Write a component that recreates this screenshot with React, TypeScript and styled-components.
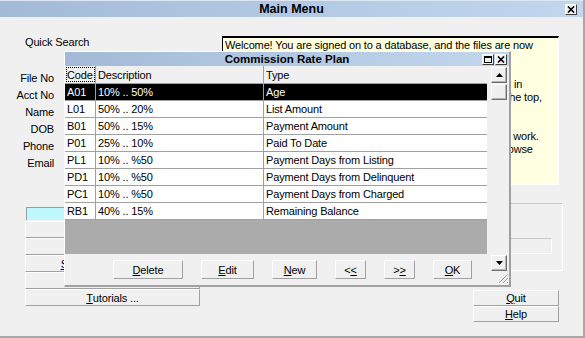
import React from "react";
import styled, { createGlobalStyle } from "styled-components";

const Global = createGlobalStyle`
  html, body { margin: 0; padding: 0; background: #f0f0f0; }
  body {
    font-family: "Liberation Sans", Arial, sans-serif;
    font-size: 11px;
    letter-spacing: -0.15px;
    color: #000;
  }
  #root { width: 585px; height: 338px; }
  u { text-decoration-thickness: 1px; text-underline-offset: 1px; }
`;

const Window = styled.div`
  position: relative;
  width: 585px;
  height: 338px;
  box-sizing: border-box;
  background: #f0f0f0;
  border-right: 2px solid #a9a9a9;
  border-bottom: 2px solid #a9a9a9;
  display: flex;
  flex-direction: column;
  overflow: hidden;
`;

const TitleBar = styled.div<{ $h: number; $size: number; $line?: boolean }>`
  flex: none;
  box-sizing: border-box;
  height: ${(p) => p.$h}px;
  display: grid;
  grid-template-columns: 1fr auto 1fr;
  align-items: center;
  background: linear-gradient(to right, #a3bad7, #c2d7ee);
  border-top: ${(p) => (p.$line ? "1px solid #dde7f3" : "none")};
  font-weight: bold;
  font-size: ${(p) => p.$size}px;
  letter-spacing: 0;
`;

const TitleText = styled.span`
  white-space: nowrap;
`;

const TitleButtons = styled.div<{ $mr: number }>`
  justify-self: end;
  display: flex;
  gap: 1px;
  margin-right: ${(p) => p.$mr}px;
`;

const CtlButton = styled.div`
  width: 12px;
  height: 11px;
  box-sizing: border-box;
  background: #f0f0f0;
  border: 1px solid;
  border-color: #ffffff #404040 #404040 #ffffff;
  display: grid;
  place-items: center;
`;

const Body = styled.div`
  flex: 1;
  display: flex;
  flex-direction: column;
  padding: 19px 22px 0 25px;
`;

const TopRow = styled.div`
  display: flex;
  align-items: flex-start;
`;

const LeftCol = styled.div`
  width: 197px;
  flex: none;
  display: flex;
  flex-direction: column;
`;

const QuickLabel = styled.div`
  line-height: 13px;
  white-space: nowrap;
`;

const FieldList = styled.div`
  margin: 20px 0 0 -15px;
  display: flex;
  flex-direction: column;
`;

const FieldRow = styled.div`
  height: 17px;
  display: grid;
  grid-template-columns: 44px 1fr;
  column-gap: 12px;
  align-items: center;
`;

const FieldLabel = styled.span`
  text-align: right;
  white-space: nowrap;
`;

const FieldInput = styled.div`
  height: 15px;
  box-sizing: border-box;
  background: #fff;
  border: 1px solid;
  border-color: #a0a0a0 #fff #fff #a0a0a0;
`;

const InfoPanel = styled.div`
  width: 337px;
  height: 149px;
  box-sizing: border-box;
  background: #ffffe1;
  border-top: 2px solid #000;
  border-left: 1px solid #000;
  border-right: 1px solid #fff;
  border-bottom: 1px solid #fff;
  padding: 1px 0 0 2px;
  overflow: hidden;
`;

const InfoLine = styled.div`
  line-height: 13px;
  white-space: nowrap;
`;

const LowerGrid = styled.div`
  display: grid;
  grid-template-columns: 175px 1fr;
  column-gap: 15px;
  align-items: start;
`;

const NavCol = styled.div`
  display: flex;
  flex-direction: column;
`;

const CyanField = styled.div`
  margin: 22px 0 0 1px;
  height: 13px;
  box-sizing: border-box;
  background: #bff9ff;
  border-top: 1px solid #9a9a9a;
  border-left: 1px solid #9a9a9a;
`;

const NavStack = styled.div`
  margin-top: 1px;
  display: flex;
  flex-direction: column;
`;

const FlatButton = styled.div`
  box-sizing: border-box;
  background: #f0f0f0;
  border: 1px solid;
  border-color: #ffffff #a0a0a0 #a0a0a0 #ffffff;
  display: flex;
  align-items: center;
  justify-content: center;
  white-space: nowrap;
`;

const NavButton = styled(FlatButton)<{ $w?: number }>`
  height: 17px;
  width: ${(p) => (p.$w ? `${p.$w}px` : "auto")};
`;

const GroupBox = styled.div`
  margin: 18px -2px 0 0;
  height: 68px;
  box-sizing: border-box;
  border-top: 1px solid #c8c8c8;
  border-right: 1px solid #fff;
  border-bottom: 1px solid #fff;
  display: flex;
  flex-direction: column;
  justify-content: flex-end;
  padding: 0 10px 16px 0;
`;

const GroupField = styled.div`
  height: 16px;
  box-sizing: border-box;
  border-top: 1px solid #c8c8c8;
  border-right: 1px solid #fff;
  border-bottom: 1px solid #fff;
`;

const BottomRow = styled.div`
  display: flex;
  justify-content: space-between;
  align-items: flex-start;
`;

const SideButtons = styled.div`
  margin: 1px 2px 0 0;
  width: 86px;
  display: flex;
  flex-direction: column;
`;

const SideButton = styled(FlatButton)`
  height: 16px;
`;

/* ---------- dialog ---------- */

const Dialog = styled.div`
  position: absolute;
  left: 64px;
  top: 51px;
  width: 447px;
  height: 236px;
  box-sizing: border-box;
  background: #f0f0f0;
  border-top: 1px solid #fff;
  border-left: 1px solid #fff;
  border-right: 2px solid #a0a0a0;
  border-bottom: 2px solid #a0a0a0;
  display: flex;
  flex-direction: column;
`;

const DialogBody = styled.div`
  flex: 1;
  display: flex;
`;

const LeftPane = styled.div`
  width: 422px;
  flex: none;
  display: flex;
  flex-direction: column;
`;

const GridBox = styled.div`
  height: 188px;
  background: #ababab;
  display: flex;
  flex-direction: column;
`;

const GridRow = styled.div<{ $head?: boolean; $sel?: boolean }>`
  display: grid;
  grid-template-columns: 31px 168px 1fr;
  height: ${(p) => (p.$head ? 18 : 17)}px;
  box-sizing: border-box;
  border-bottom: 1px solid #a0a0a0;
  background: ${(p) => (p.$head ? "#f0f0f0" : p.$sel ? "#000" : "#fff")};
  color: ${(p) => (p.$sel ? "#fff" : "#000")};
`;

const Cell = styled.div<{ $focus?: boolean }>`
  padding-left: 2px;
  display: flex;
  align-items: center;
  white-space: nowrap;
  overflow: hidden;
  border-right: 1px solid #a0a0a0;
  outline: ${(p) => (p.$focus ? "1px dotted #000" : "none")};
  outline-offset: -2px;
  &:last-child { border-right: none; }
`;

const ButtonRow = styled.div`
  display: flex;
  gap: 18px;
  padding: 6px 0 0 48px;
`;

const DlgButton = styled(FlatButton)<{ $w: number }>`
  width: ${(p) => p.$w}px;
  height: 19px;
`;

const RightPane = styled.div`
  margin: 1px 2px 0 3px;
  width: 17px;
  flex: none;
  display: flex;
  flex-direction: column;
`;

const ScrollBar = styled.div`
  height: 204px;
  display: flex;
  flex-direction: column;
  align-items: flex-end;
`;

const ScrollBtn = styled.div`
  width: 16px;
  height: 16px;
  box-sizing: border-box;
  background: #f0f0f0;
  border: 1px solid;
  border-color: #ffffff #6f6f6f #6f6f6f #ffffff;
  box-shadow: inset -1px -1px 0 #b4b4b4;
  display: grid;
  place-items: center;
`;

const Thumb = styled(ScrollBtn)`
  margin-top: 1px;
`;

const Track = styled.div`
  flex: 1;
`;

const Grip = styled.div`
  margin: 2px -2px 0 0;
  align-self: flex-end;
  width: 11px;
  height: 11px;
  display: flex;
`;

const CloseGlyph = () => (
  <svg width="8" height="7" viewBox="0 0 8 7">
    <path d="M1 0.5 L7 6.5 M7 0.5 L1 6.5" stroke="#000" strokeWidth="1.6" />
  </svg>
);

const MaxGlyph = () => (
  <svg width="8" height="7" viewBox="0 0 8 7">
    <rect x="0.5" y="0.5" width="7" height="6" fill="none" stroke="#000" strokeWidth="1" />
    <rect x="0" y="0" width="8" height="2" fill="#000" />
  </svg>
);

const Arrow = ({ down }: { down?: boolean }) => (
  <svg width="7" height="4" viewBox="0 0 7 4">
    <path d={down ? "M0 0 L7 0 L3.5 4 Z" : "M0 4 L7 4 L3.5 0 Z"} fill="#000" />
  </svg>
);

const GripGlyph = () => (
  <svg width="11" height="11" viewBox="0 0 11 11">
    <path d="M10 1 L1 10 M10 5 L5 10 M10 9 L9 10" stroke="#a0a0a0" strokeWidth="1" />
    <path d="M10 2 L2 10 M10 6 L6 10" stroke="#ffffff" strokeWidth="1" />
  </svg>
);

const labels = ["File No", "Acct No", "Name", "DOB", "Phone", "Email"];

const infoLines = [
  "Welcome! You are signed on to a database, and the files are now",
  "open and ready. To find an account, type a file number,",
  "account number, name, birth date, phone or email into",
  "the Quick Search boxes at the left. Matching cases are listed in",
  "the grid below these. Use the buttons on the left, and along the top,",
  "to open the other screens of the program.",
  "",
  "The Tutorials button shows you just how the various screens work.",
  "Click any of the buttons below to learn how to search and browse",
];

const rows: [string, string, string][] = [
  ["A01", "10% .. 50%", "Age"],
  ["L01", "50% .. 20%", "List Amount"],
  ["B01", "50% .. 15%", "Payment Amount"],
  ["P01", "25% .. 10%", "Paid To Date"],
  ["PL1", "10% .. %50", "Payment Days from Listing"],
  ["PD1", "10% .. %50", "Payment Days from Delinquent"],
  ["PC1", "10% .. %50", "Payment Days from Charged"],
  ["RB1", "40% .. 15%", "Remaining Balance"],
];

export default function App() {
  return (
    <>
      <Global />
      <Window>
        <TitleBar $h={17} $size={12.5} $line>
          <span />
          <TitleText>Main Menu</TitleText>
          <TitleButtons $mr={6}>
            <CtlButton>
              <CloseGlyph />
            </CtlButton>
          </TitleButtons>
        </TitleBar>
        <Body>
          <TopRow>
            <LeftCol>
              <QuickLabel>Quick Search</QuickLabel>
              <FieldList>
                {labels.map((l) => (
                  <FieldRow key={l}>
                    <FieldLabel>{l}</FieldLabel>
                    <FieldInput />
                  </FieldRow>
                ))}
              </FieldList>
            </LeftCol>
            <InfoPanel>
              {infoLines.map((l, i) => (
                <InfoLine key={i}>{l || "\u00a0"}</InfoLine>
              ))}
            </InfoPanel>
          </TopRow>
          <LowerGrid>
            <NavCol>
              <CyanField />
              <NavStack>
                <NavButton>
                  <u>D</u>ebtor Files
                </NavButton>
                <NavButton>
                  <u>C</u>lient Files
                </NavButton>
                <NavButton>
                  <u>S</u>tatistics and Reports
                </NavButton>
                <NavButton>
                  <u>U</u>tilities
                </NavButton>
              </NavStack>
            </NavCol>
            <GroupBox>
              <GroupField />
            </GroupBox>
          </LowerGrid>
          <BottomRow>
            <NavButton $w={175}>
              <u>T</u>utorials ...
            </NavButton>
            <SideButtons>
              <SideButton>
                <u>Q</u>uit
              </SideButton>
              <SideButton>
                <u>H</u>elp
              </SideButton>
            </SideButtons>
          </BottomRow>
        </Body>

        <Dialog>
          <TitleBar $h={14} $size={11.5}>
            <span />
            <TitleText>Commission Rate Plan</TitleText>
            <TitleButtons $mr={2}>
              <CtlButton>
                <MaxGlyph />
              </CtlButton>
              <CtlButton>
                <CloseGlyph />
              </CtlButton>
            </TitleButtons>
          </TitleBar>
          <DialogBody>
            <LeftPane>
              <GridBox>
                <GridRow $head>
                  <Cell $focus>Code</Cell>
                  <Cell>Description</Cell>
                  <Cell>Type</Cell>
                </GridRow>
                {rows.map((r, i) => (
                  <GridRow key={r[0]} $sel={i === 0}>
                    <Cell>{r[0]}</Cell>
                    <Cell>{r[1]}</Cell>
                    <Cell>{r[2]}</Cell>
                  </GridRow>
                ))}
              </GridBox>
              <ButtonRow>
                <DlgButton $w={70}>
                  <u>D</u>elete
                </DlgButton>
                <DlgButton $w={53}>
                  <u>E</u>dit
                </DlgButton>
                <DlgButton $w={45}>
                  <u>N</u>ew
                </DlgButton>
                <DlgButton $w={31}>
                  {"<"}
                  <u>{"<"}</u>
                </DlgButton>
                <DlgButton $w={31}>
                  {">"}
                  <u>{">"}</u>
                </DlgButton>
                <DlgButton $w={39}>
                  <u>O</u>K
                </DlgButton>
              </ButtonRow>
            </LeftPane>
            <RightPane>
              <ScrollBar>
                <ScrollBtn>
                  <Arrow />
                </ScrollBtn>
                <Thumb />
                <Track />
                <ScrollBtn>
                  <Arrow down />
                </ScrollBtn>
              </ScrollBar>
              <Grip>
                <GripGlyph />
              </Grip>
            </RightPane>
          </DialogBody>
        </Dialog>
      </Window>
    </>
  );
}
